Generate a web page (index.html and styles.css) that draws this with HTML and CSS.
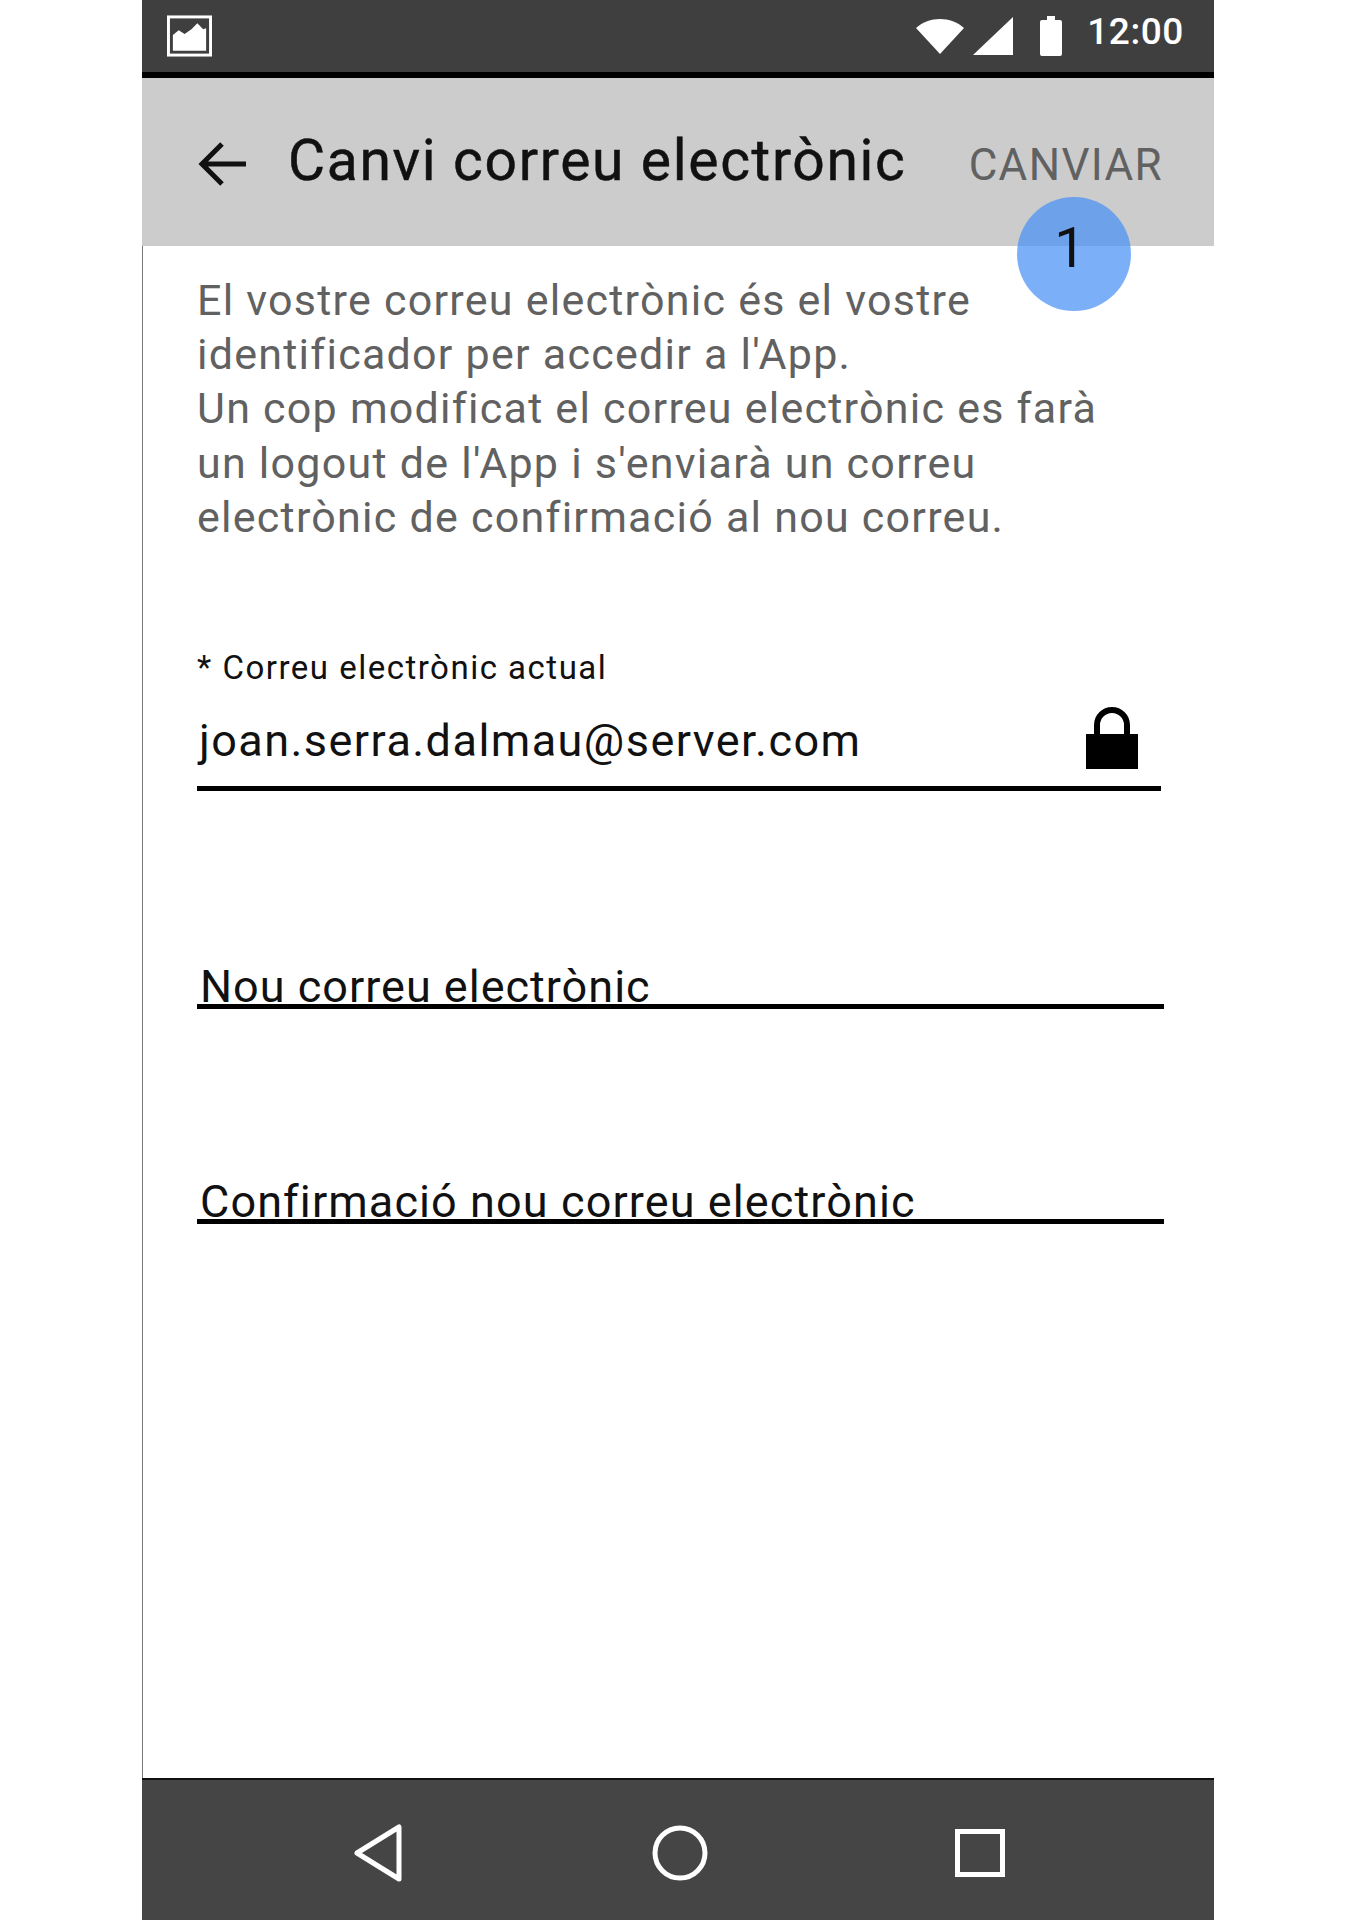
FILE: index.html
```html
<!DOCTYPE html>
<html lang="ca">
<head>
  <meta charset="UTF-8">
  <title>Canvi correu electrònic</title>
  <link rel="stylesheet" href="styles.css">
</head>
<body>
  <div class="phone">
    <div class="status-bar">
      <svg class="status-pic" viewBox="0 0 46 42">
        <rect x="1.5" y="1.5" width="43" height="39" fill="none" stroke="#fff" stroke-width="3"/>
        <path d="M6 36V20l6-5 6 4 7-5 6-6 6 6 3-1v23z" fill="#fff"/>
      </svg>
      <div class="status-right">
        <svg class="status-wifi" viewBox="0 0 48 36"><path d="M0 10C13-2 35-2 48 10L24 36z" fill="#fff"/></svg>
        <svg class="status-signal" viewBox="0 0 40 38"><path d="M0 38L40 0v38z" fill="#fff"/></svg>
        <svg class="status-battery" viewBox="0 0 22 40"><path d="M7 0h8v4h5a2 2 0 0 1 2 2v32a2 2 0 0 1-2 2H2a2 2 0 0 1-2-2V6a2 2 0 0 1 2-2h5z" fill="#fff"/></svg>
        <span class="status-time">12:00</span>
      </div>
    </div>

    <header class="app-bar">
      <svg class="back-arrow" viewBox="0 0 50 46"><path d="M48 23H4M24 3L4 23l20 20" fill="none" stroke="#111" stroke-width="5"/></svg>
      <h1>Canvi correu electrònic</h1>
      <span class="action">CANVIAR</span>
      <span class="badge">1</span>
    </header>

    <main class="content">
      <p class="intro">El vostre correu electrònic és el vostre<br>identificador per accedir a l'App.<br>Un cop modificat el correu electrònic es farà<br>un logout de l'App i s'enviarà un correu<br>electrònic de confirmació al nou correu.</p>

      <div class="field field-current">
        <label>* Correu electrònic actual</label>
        <div class="field-value">
          <span>joan.serra.dalmau@server.com</span>
          <svg class="lock" viewBox="0 0 52 62"><path d="M11 28V18a15 15 0 0 1 30 0v10" fill="none" stroke="#000" stroke-width="6"/><rect x="0" y="27" width="52" height="35" fill="#000"/></svg>
        </div>
      </div>

      <div class="field field-new">Nou correu electrònic</div>
      <div class="field field-confirm">Confirmació nou correu electrònic</div>
    </main>

    <nav class="nav-bar">
      <svg class="nav-back" viewBox="0 0 50 60"><path d="M46 4V56L4 30z" fill="none" stroke="#fff" stroke-width="5" stroke-linejoin="round"/></svg>
      <svg class="nav-home" viewBox="0 0 56 56"><circle cx="28" cy="28" r="25" fill="none" stroke="#fff" stroke-width="5"/></svg>
      <svg class="nav-recent" viewBox="0 0 50 48"><rect x="2.5" y="2.5" width="45" height="43" fill="none" stroke="#fff" stroke-width="5"/></svg>
    </nav>
  </div>
</body>
</html>
```

FILE: styles.css
```css
body {
  margin: 0;
  background-color: #fff;
  font-family: Roboto, sans-serif;
}

.phone {
  width: 1072px;
  height: 1920px;
  margin-left: 142px;
  display: flex;
  flex-direction: column;
}

.status-bar {
  height: 72px;
  flex: none;
  background-color: #3f3f3f;
  border-bottom: 6px solid #000;
  display: flex;
  align-items: center;
  justify-content: space-between;
  padding: 0 30px 0 25px;
}

.status-pic {
  width: 45px;
  height: 42px;
}

.status-right {
  display: flex;
  align-items: center;
}

.status-wifi {
  width: 48px;
  height: 36px;
  margin-right: 9px;
}

.status-signal {
  width: 40px;
  height: 38px;
  margin-right: 27px;
}

.status-battery {
  width: 22px;
  height: 40px;
  margin-right: 25px;
}

.status-time {
  color: #fff;
  font-size: 37px;
  font-weight: 500;
  letter-spacing: 0.6px;
  margin-top: -9px;
}

.app-bar {
  position: relative;
  height: 168px;
  flex: none;
  background-color: #ccc;
  display: flex;
  align-items: center;
  padding: 0 51px 0 56px;
}

.back-arrow {
  width: 50px;
  height: 46px;
  margin-top: 3px;
  margin-right: 40px;
}

.app-bar h1 {
  margin: 0 0 4px;
  flex: 1;
  font-size: 57px;
  font-weight: 400;
  letter-spacing: 1.65px;
  color: #111;
  -webkit-text-stroke: 0.5px #111;
}

.action {
  font-size: 44px;
  letter-spacing: 1.35px;
  color: #616161;
  margin-top: 6px;
}

.badge {
  position: absolute;
  left: 875px;
  top: 119px;
  width: 106px;
  height: 114px;
  padding-right: 8px;
  border-radius: 50%;
  background-color: rgba(72, 145, 247, 0.72);
  color: #111;
  font-size: 56px;
  text-align: center;
  line-height: 102px;
}

.content {
  flex: 1;
  border-left: 1px solid #777;
  padding: 0 49px 0 54px;
}

.intro {
  margin: 27px 0 0;
  font-size: 43px;
  letter-spacing: 1.25px;
  line-height: 54.2px;
  color: #616161;
}

.field {
  color: #111;
  border-bottom: 5px solid #000;
}

.field-current {
  margin-top: 104px;
  width: 964px;
  padding-bottom: 1px;
}

.field-current label {
  display: block;
  font-size: 33px;
  letter-spacing: 1.5px;
  line-height: 40px;
  margin-bottom: 7px;
}

.field-value {
  display: flex;
  align-items: center;
  justify-content: space-between;
  font-size: 45px;
  letter-spacing: 1.45px;
  height: 90px;
  padding: 0 23px 0 2px;
}

.lock {
  width: 52px;
  height: 62px;
  margin-bottom: 4px;
}

.field-new,
.field-confirm {
  padding-left: 3px;
  font-size: 45px;
  line-height: 34px;
  box-sizing: border-box;
  width: 967px;
}

.field-new {
  margin-top: 179px;
  letter-spacing: 1px;
}

.field-confirm {
  margin-top: 176px;
  letter-spacing: 1.1px;
}

.nav-bar {
  height: 142px;
  box-sizing: border-box;
  flex: none;
  background-color: #454545;
  border-top: 2px solid #111;
  padding-top: 6px;
  display: flex;
  align-items: center;
}

.nav-back {
  width: 50px;
  height: 60px;
  margin-left: 211px;
}

.nav-home {
  width: 56px;
  height: 56px;
  margin-left: 249px;
}

.nav-recent {
  width: 50px;
  height: 48px;
  margin-left: 247px;
}
```
